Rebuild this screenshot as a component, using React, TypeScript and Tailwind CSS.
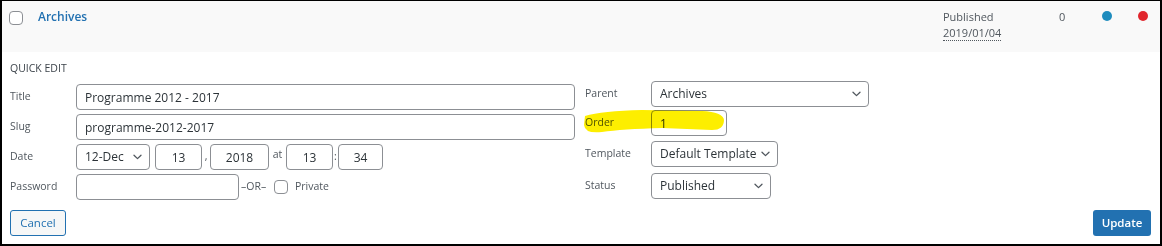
import React from 'react';

const Chevron: React.FC = () => (
  <svg width="9" height="6" viewBox="0 0 9 6" fill="none" className="shrink-0">
    <path d="M1 1.2 L4.5 4.6 L8 1.2" stroke="#50575e" strokeWidth="1.3" strokeLinecap="round" strokeLinejoin="round" />
  </svg>
);

const Box: React.FC<{ className?: string }> = ({ className = '' }) => (
  <span className={`block w-[14px] h-[14px] rounded-[4px] border border-[#8c8f94] bg-white shrink-0 ${className}`} />
);

const Field: React.FC<{ value: string; className?: string; center?: boolean }> = ({ value, className = '', center }) => (
  <input
    readOnly
    defaultValue={value}
    className={`h-[26px] rounded-[4px] border border-[#8c8f94] bg-white text-[12px] text-[#2c3338] outline-none ${center ? 'text-center px-1' : 'px-[8px]'} ${className}`}
  />
);

const Select: React.FC<{ value: string; className?: string }> = ({ value, className = '' }) => (
  <div className={`h-[26px] rounded-[4px] border border-[#8c8f94] bg-white flex items-center justify-between pl-[8px] pr-[7px] text-[12px] text-[#2c3338] ${className}`}>
    <span className="whitespace-nowrap">{value}</span>
    <Chevron />
  </div>
);

const Label: React.FC<{ children: React.ReactNode }> = ({ children }) => (
  <span className="w-[66px] shrink-0 text-[10.5px] text-[#50575e]">{children}</span>
);

export default function App() {
  return (
    <div className="relative w-[1162px] h-[246px] bg-white border-black border-t border-l-2 border-r-2 border-b-2 font-['Open_Sans',sans-serif] overflow-hidden">
      {/* post row */}
      <div className="h-[51px] bg-[#f9f9f9] flex items-start">
        <Box className="ml-[7px] mt-[10px]" />
        <a className="ml-[15px] mt-[8px] leading-[16px] text-[12px] font-semibold text-[#2271b1]">Archives</a>
        <div className="flex-1" />
        <div className="w-[116px] mt-[8px] text-[11px] leading-[16px] text-[#50575e]">
          <div>Published</div>
          <span className="border-b border-dotted border-[#50575e]">2019/01/04</span>
        </div>
        <div className="w-[43px] mt-[8px] text-[11px] leading-[16px] text-[#50575e]">0</div>
        <span className="mt-[10px] w-[10px] h-[10px] rounded-full bg-[#1e8cbe]" />
        <span className="ml-[26px] mt-[10px] w-[10px] h-[10px] rounded-full bg-[#e1262d]" />
        <div className="w-[12px]" />
      </div>

      {/* quick edit */}
      <div className="pl-[8px] pr-[9px]">
        <div className="pt-[9px] h-[29px] text-[10.5px] leading-[14px] text-[#3c434a]">QUICK EDIT</div>
        <div className="flex items-start">
          <div className="w-[565px] mt-[3px] flex flex-col gap-[4px]">
            <div className="flex items-center">
              <Label>Title</Label>
              <Field value="Programme 2012 - 2017" className="flex-1" />
            </div>
            <div className="flex items-center">
              <Label>Slug</Label>
              <Field value="programme-2012-2017" className="flex-1" />
            </div>
            <div className="flex items-center text-[10.5px] text-[#50575e]">
              <Label>Date</Label>
              <Select value="12-Dec" className="w-[74px]" />
              <Field value="13" center className="ml-[5px] w-[47px]" />
              <span className="w-[8px] text-center">,</span>
              <Field value="2018" center className="w-[59px]" />
              <span className="w-[17px] text-center -mt-[4px]">at</span>
              <Field value="13" center className="w-[47px]" />
              <span className="w-[5px] text-center">:</span>
              <Field value="34" center className="w-[45px]" />
            </div>
            <div className="flex items-center text-[10.5px] text-[#50575e]">
              <Label>Password</Label>
              <Field value="" className="w-[163px]" />
              <span className="ml-[2px] w-[33px]">–OR–</span>
              <Box />
              <span className="ml-[7px]">Private</span>
            </div>
          </div>

          <div className="ml-[10px] flex flex-col">
            <div className="flex items-center">
              <Label>Parent</Label>
              <Select value="Archives" className="w-[218px]" />
            </div>
            <div className="flex items-center mt-[3px]">
              <Label>Order</Label>
              <Field value="1" className="w-[76px]" />
            </div>
            <div className="flex items-center mt-[5px]">
              <Label>Template</Label>
              <Select value="Default Template" className="w-[127px]" />
            </div>
            <div className="flex items-center mt-[6px]">
              <Label>Status</Label>
              <Select value="Published" className="w-[120px]" />
            </div>
          </div>
        </div>

        <div className="mt-[10px] flex justify-between">
          <button className="h-[26px] w-[56px] rounded-[3px] border border-[#2271b1] bg-[#f6f7f7] text-[11.5px] text-[#2271b1]">
            Cancel
          </button>
          <button className="h-[26px] w-[58px] rounded-[3px] bg-[#2271b1] text-[11.5px] font-semibold text-white">
            Update
          </button>
        </div>
      </div>

      {/* highlighter mark */}
      <svg className="absolute left-0 top-0 pointer-events-none mix-blend-multiply" width="1162" height="246">
        <path
          d="M583 115 Q600 110 640 109 L700 110 Q721 111 722 119 Q722 129 710 129 L660 127 Q620 128 600 131 Q583 133 582 124 Z"
          fill="#fdee00"
        />
      </svg>
    </div>
  );
}
